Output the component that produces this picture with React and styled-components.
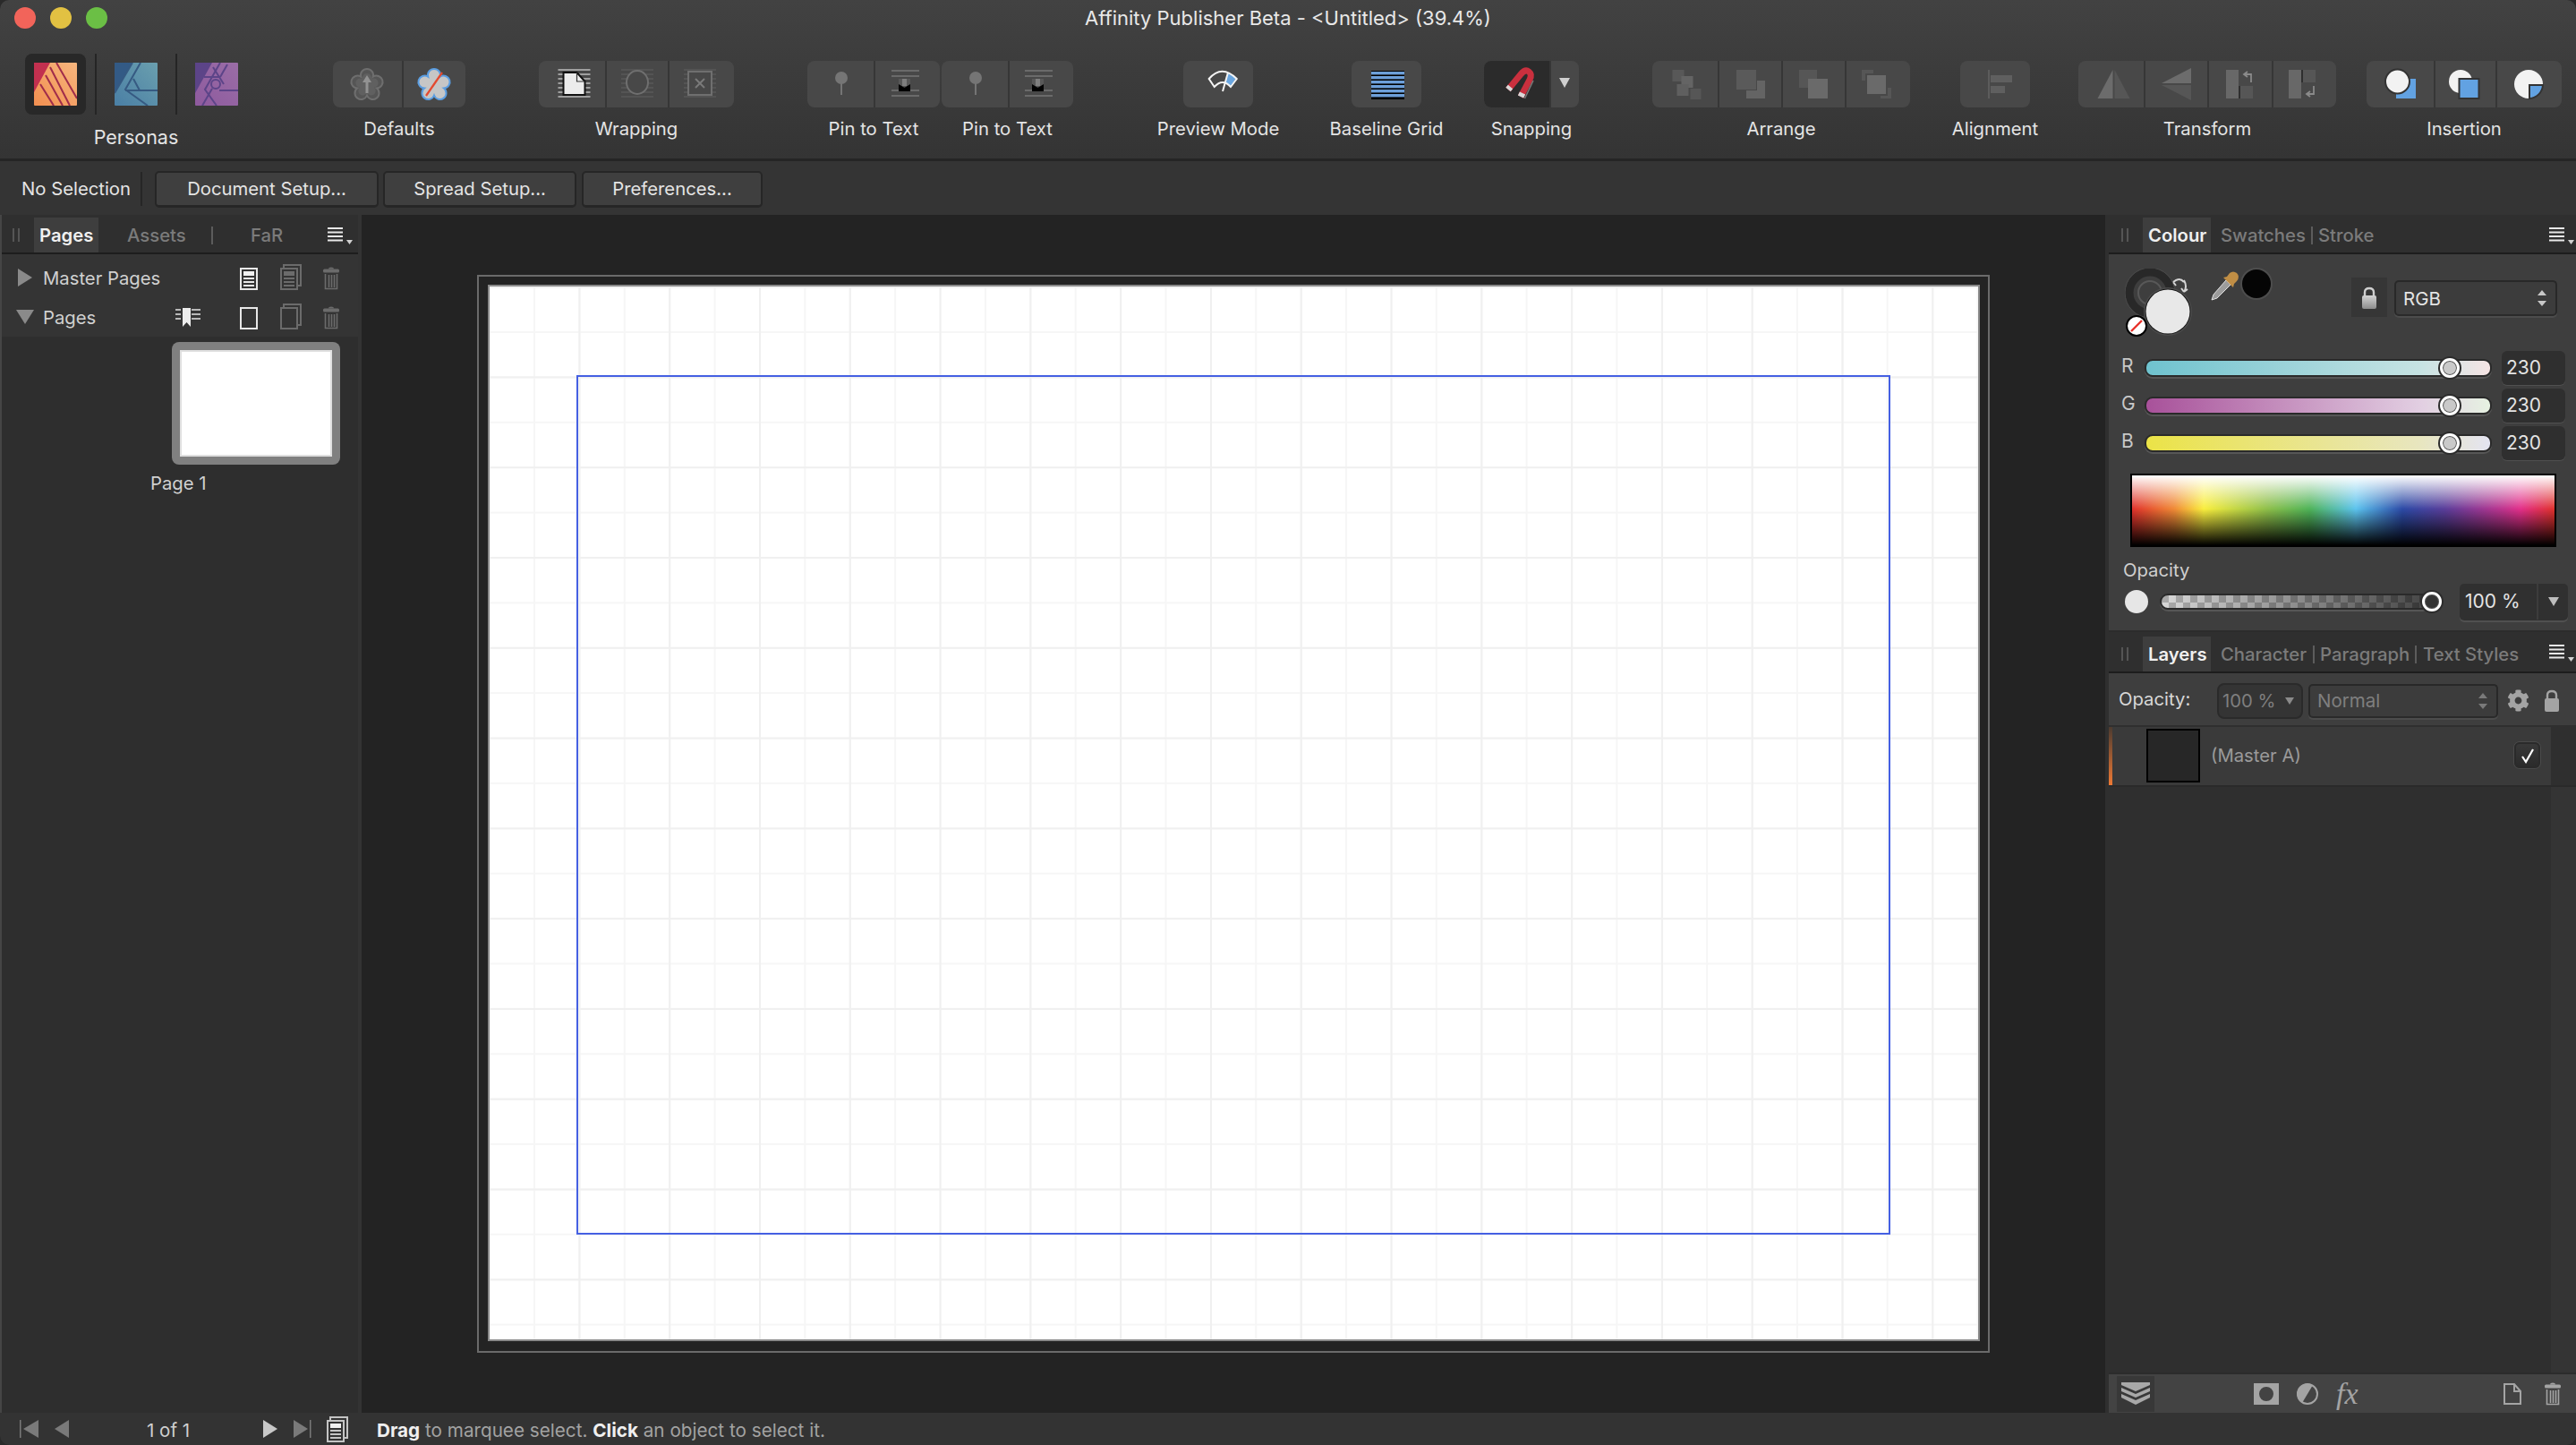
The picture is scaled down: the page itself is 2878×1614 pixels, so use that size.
import React from "react";
import styled, { createGlobalStyle } from "styled-components";
import { FaCog } from "react-icons/fa";

const GlobalStyle = createGlobalStyle`
  html, body {
    margin: 0;
    padding: 0;
    background: #2a2a2a;
    overflow: hidden;
  }
  * {
    box-sizing: border-box;
  }
`;

const Window = styled.div`
  width: 2878px;
  height: 1614px;
  display: flex;
  flex-direction: column;
  overflow: hidden;
  border-radius: 10px;
  font-family: Inter, "Liberation Sans", sans-serif;
  font-size: 20.3px;
  color: #e4e4e4;
  background: #232323;
`;

const Header = styled.header`
  height: 180px;
  flex: none;
  background: linear-gradient(to bottom, #424242, #343434);
  border-bottom: 3px solid #252525;
`;

const TitleBar = styled.div`
  height: 40px;
  display: grid;
  grid-template-columns: 1fr auto 1fr;
  align-items: center;
  padding: 0 16px;
`;

const Lights = styled.div`
  display: flex;
  gap: 16px;
`;

const Light = styled.span`
  width: 24px;
  height: 24px;
  border-radius: 50%;
  background: ${(p) => p.$color};
`;

const Title = styled.div`
  font-size: 22px;
  color: #e8e8e8;
  white-space: nowrap;
`;

const Toolbar = styled.div`
  display: flex;
  align-items: flex-start;
  padding: 20px 0 0 28px;
`;

const Personas = styled.div`
  width: 248px;
  flex: none;
  display: flex;
  flex-direction: column;
  align-items: center;
`;

const PersonaRow = styled.div`
  display: flex;
  height: 68px;
  width: 100%;
  justify-content: space-between;
`;

const PersonaSlot = styled.div`
  width: 68px;
  height: 68px;
  display: flex;
  align-items: center;
  justify-content: center;
  border-radius: 8px;
  background: ${(p) => (p.$active ? "#282828" : "transparent")};
`;

const PersonaDivider = styled.span`
  width: 2px;
  background: #252525;
`;

const PersonaLabel = styled.div`
  margin-top: 12px;
  line-height: 26px;
  font-size: 21.5px;
`;

const ToolGroup = styled.div`
  flex: none;
  width: ${(p) => p.$width}px;
  margin-left: ${(p) => p.$gap}px;
  margin-top: 8px;
  display: flex;
  flex-direction: column;
  align-items: center;
`;

const ToolStrip = styled.div`
  width: 100%;
  height: 52px;
  display: flex;
  background: #484848;
  border-radius: 8px;
  overflow: hidden;
`;

const ToolButton = styled.div`
  flex: ${(p) => p.$grow || 1} 1 0;
  display: flex;
  align-items: center;
  justify-content: center;
  background: ${(p) => (p.$on ? "#2b2b2b" : "transparent")};
  & + & {
    border-left: 2px solid #363636;
  }
`;

const ToolLabel = styled.div`
  margin-top: 11px;
  line-height: 26px;
  white-space: nowrap;
`;

const ContextBar = styled.div`
  height: 60px;
  flex: none;
  display: flex;
  align-items: center;
  background: #343434;
  padding: 2px 0 0 24px;
`;

const SelectionText = styled.div`
  width: 135px;
  flex: none;
  height: 38px;
  line-height: 38px;
  border-right: 2px solid #262626;
`;

const SetupButton = styled.div`
  width: ${(p) => p.$width}px;
  margin-left: ${(p) => p.$gap}px;
  height: 41px;
  flex: none;
  display: flex;
  align-items: center;
  justify-content: center;
  background: #3f3f3f;
  border: 2px solid #262626;
  border-bottom-width: 3px;
  border-radius: 5px;
`;

const Body = styled.div`
  flex: 1;
  min-height: 0;
  display: flex;
`;

const LeftPanel = styled.aside`
  width: 404px;
  flex: none;
  display: flex;
  flex-direction: column;
  background: #2e2e2e;
  border-left: 2px solid #454545;
  border-right: 4px solid #333;
`;

const TabBar = styled.div`
  height: ${(p) => p.$height || 44}px;
  flex: none;
  display: flex;
  align-items: flex-end;
  border-bottom: 2px solid #1d1d1d;
  background: #2f2f2f;
  position: relative;
`;

const Grip = styled.span`
  width: 8px;
  height: 15px;
  margin: 0 ${(p) => p.$right}px 12px ${(p) => p.$left}px;
  flex: none;
  border-left: 2px solid #555;
  border-right: 2px solid #555;
`;

const Tab = styled.div`
  width: ${(p) => p.$width}px;
  margin-left: ${(p) => p.$gap || 0}px;
  height: 39px;
  flex: none;
  line-height: 40px;
  padding-left: ${(p) => p.$pad || 0}px;
  white-space: nowrap;
  color: ${(p) => (p.$active ? "#f0f0f0" : "#7b7b7b")};
  font-weight: ${(p) => (p.$active ? 600 : 500)};
  background: ${(p) => (p.$active ? "#3e3e3e" : "transparent")};
`;

const TabRule = styled.span`
  width: 2px;
  height: 20px;
  margin: 0 0 9px ${(p) => p.$gap}px;
  flex: none;
  background: #5c5c5c;
`;

const MenuIcon = styled.svg`
  position: absolute;
  right: ${(p) => p.$right}px;
  top: 14px;
`;

const PagesHead = styled.div`
  flex: none;
  height: 92px;
  padding-top: 4px;
  background: #343434;
`;

const PageRow = styled.div`
  height: 44px;
  display: flex;
  align-items: center;
  padding-left: 16px;
  position: relative;
  color: #d0d0d0;
`;

const RowName = styled.span`
  margin-left: ${(p) => p.$gap}px;
  width: ${(p) => p.$width}px;
  flex: none;
`;

const RowIcons = styled.div`
  display: flex;
  align-items: flex-end;
  gap: 24px;
  margin: -2px 0 0 ${(p) => p.$gap}px;
`;

const Thumb = styled.div`
  width: 188px;
  height: 137px;
  margin: 6px 0 0 190px;
  padding: 9px;
  background: #808080;
  border-radius: 8px;
`;

const ThumbPaper = styled.div`
  height: 100%;
  background: #fff;
  border: 2px solid #e0e0e0;
`;

const ThumbCaption = styled.div`
  margin: 8px 0 0 166px;
  line-height: 26px;
  color: #d0d0d0;
`;

const Canvas = styled.main`
  flex: 1;
  min-width: 0;
  background: #232323;
  padding: 67px 0 0 129px;
`;

const PageFrame = styled.div`
  width: 1690px;
  height: 1204px;
  border: 2px solid #6a6a6a;
  padding: 9px 9px 11px 10px;
`;

const Paper = styled.div`
  height: 100%;
  border: 2px solid #8a8a8a;
  padding: 99px 98px 117px 97px;
  background-color: #fff;
  background-image: linear-gradient(to right, #f0f0f0 2px, transparent 2px),
    linear-gradient(to bottom, #f0f0f0 2px, transparent 2px),
    linear-gradient(to right, #f6f6f6 2px, transparent 2px),
    linear-gradient(to bottom, #f6f6f6 2px, transparent 2px);
  background-size: 100.8px 100.8px, 100.8px 100.8px, 50.4px 50.4px, 50.4px 50.4px;
  background-position: -1.4px 0, 0 -0.4px, -1.4px 0, 0 -0.4px;
`;

const MarginBox = styled.div`
  height: 100%;
  border: 2px solid #4560e2;
`;

const RightColumn = styled.aside`
  width: 526px;
  flex: none;
  display: flex;
  flex-direction: column;
  background: #2e2e2e;
  border-left: 4px solid #2f2f2f;
`;

const ColourPanel = styled.section`
  height: 466px;
  flex: none;
  background: #3e3e3e;
  border-bottom: 2px solid #2c2c2c;
`;

const FillRow = styled.div`
  height: 90px;
  display: flex;
  position: relative;
`;

const FillWrap = styled.div`
  position: absolute;
  left: 18px;
  top: 16px;
`;

const DropperSvg = styled.svg`
  position: absolute;
  left: 113px;
  top: 18px;
`;

const LockBox = styled.div`
  position: absolute;
  left: 271px;
  top: 26px;
  width: 40px;
  height: 44px;
  display: flex;
  align-items: center;
  justify-content: center;
  background: #363636;
`;

const SelectBox = styled.div`
  width: ${(p) => p.$width}px;
  height: ${(p) => p.$height || 40}px;
  flex: none;
  display: flex;
  align-items: center;
  justify-content: space-between;
  padding: 0 10px 0 8px;
  background: #3c3c3c;
  border: 2px solid #282828;
  border-bottom-color: #2a2a2a;
  border-radius: 5px;
  box-shadow: 0 2px 0 #4c4c4c;
  color: ${(p) => p.$color || "#e4e4e4"};
  font-size: 20.5px;
`;

const RgbSelect = styled(SelectBox)`
  position: absolute;
  left: 319px;
  top: 29px;
`;

const Sliders = styled.div`
  display: flex;
  flex-direction: column;
  gap: 4px;
  margin-top: 18px;
`;

const SliderRow = styled.div`
  height: 38px;
  display: flex;
  align-items: center;
  padding-left: 14px;
  color: #c8c8c8;
  font-size: 21px;
`;

const SliderLetter = styled.span`
  width: 26px;
  flex: none;
  margin-top: -5px;
`;

const Track = styled.div`
  position: relative;
  width: ${(p) => p.$width}px;
  height: ${(p) => p.$height}px;
  flex: none;
  border-radius: 9px;
  border: 2px solid #2a2a2a;
  background: ${(p) => p.$fill};
  box-shadow: 0 2px 0 #565656;
`;

const OpacityTrack = styled(Track)`
  margin-left: 13px;
`;

const Thumbwheel = styled.span`
  position: absolute;
  width: 22px;
  height: 22px;
  top: 50%;
  left: ${(p) => p.$left}px;
  transform: translate(-50%, -50%);
  border-radius: 50%;
  border: 3px solid #fff;
  background: ${(p) => p.$fill};
  box-shadow: 0 0 0 2px #2c2c2c, inset 0 0 0 1px #555;
`;

const ValueBox = styled.div`
  width: 71px;
  height: 38px;
  flex: none;
  margin-left: 11px;
  padding-left: 5px;
  line-height: 38px;
  color: #e4e4e4;
  background: #2f2f2f;
  border-radius: 6px;
  box-shadow: 0 1px 0 #505050;
`;

const Spectrum = styled.div`
  width: 476px;
  height: 82px;
  margin: 15px 0 0 24px;
  border: 2px solid #000;
  background: linear-gradient(to bottom, #fff 0%, rgba(255, 255, 255, 0) 48%),
    linear-gradient(to bottom, rgba(0, 0, 0, 0) 48%, #000 100%),
    linear-gradient(
      to right,
      #e0322c 0%,
      #f08a36 10%,
      #f9ee3e 17%,
      #8ebf4a 32%,
      #4fb358 42%,
      #5cc3ee 53%,
      #2c4aa6 64%,
      #5a3e9a 74%,
      #c0348e 88%,
      #e3308a 92%,
      #e0322c 100%
    );
`;

const OpacityLabel = styled.div`
  margin: 13px 0 0 16px;
  line-height: 26px;
  color: #cfcfcf;
`;

const OpacityRow = styled.div`
  display: flex;
  align-items: center;
  margin-top: 1px;
  height: 42px;
  padding-left: 18px;
`;

const OpacityDot = styled.span`
  width: 26px;
  height: 26px;
  flex: none;
  border-radius: 50%;
  background: #e6e6e6;
`;

const OpacityValue = styled.div`
  width: 121px;
  height: 41px;
  margin-left: 32px;
  flex: none;
  display: flex;
  align-items: center;
  background: #303030;
  border-radius: 5px;
  box-shadow: 0 2px 0 #505050;
  font-size: 21px;
`;

const OpacityText = styled.span`
  width: 88px;
  padding-left: 6px;
  border-right: 2px solid #3c3c3c;
  line-height: 40px;
`;

const DropArrow = styled.span`
  margin-left: 11px;
  border-top: 10px solid #bdbdbd;
  border-left: 6px solid transparent;
  border-right: 6px solid transparent;
`;

const LayersPanel = styled.section`
  flex: 1;
  min-height: 0;
  display: flex;
  flex-direction: column;
  background: #2f2f2f;
`;

const LayerControls = styled.div`
  height: 58px;
  flex: none;
  display: flex;
  align-items: center;
  padding: 3px 0 0 11px;
  background: #3e3e3e;
`;

const ControlLabel = styled.span`
  width: 110px;
  flex: none;
  margin-top: -4px;
  color: #d8d8d8;
`;

const PercentBox = styled.div`
  width: 96px;
  height: 40px;
  flex: none;
  display: flex;
  align-items: center;
  justify-content: space-between;
  padding: 0 8px 0 4px;
  background: #343434;
  border: 2px solid #2a2a2a;
  border-radius: 8px;
  color: #7f7f7f;
`;

const TinyArrow = styled.span`
  border-top: 8px solid #8a8a8a;
  border-left: 5px solid transparent;
  border-right: 5px solid transparent;
`;

const BlendSelect = styled(SelectBox)`
  margin-left: 6px;
  background: #3c3c3c;
`;

const ControlIcons = styled.div`
  display: flex;
  align-items: center;
  gap: 16px;
  margin-left: 10px;
  color: #a4a4a4;
`;

const LayerRow = styled.div`
  width: 494px;
  height: 65px;
  flex: none;
  margin-top: 2px;
  display: flex;
  align-items: center;
  padding-left: 38px;
  background: #3a3a3a;
  border-left: 4px solid;
  border-image: linear-gradient(to bottom, #4a3a30, #f07a34) 1;
`;

const LayerThumb = styled.div`
  width: 60px;
  height: 60px;
  flex: none;
  margin-top: -2px;
  background: #272727;
  border: 2px solid #000;
`;

const LayerName = styled.span`
  margin: -3px 0 0 12px;
  width: 339px;
  flex: none;
  color: #9a9a9a;
`;

const CheckBox = styled.div`
  width: 29px;
  height: 29px;
  margin-top: -2px;
  display: flex;
  align-items: center;
  justify-content: center;
  background: linear-gradient(to bottom, #383838, #2b2b2b);
  border: 2px solid #2a2a2a;
  border-radius: 6px;
  box-shadow: 0 0 0 1px #4a4a4a;
`;

const LayerSpace = styled.div`
  flex: 1;
  border-top: 2px solid #2a2a2a;
  background: linear-gradient(to right, #2f2f2f 494px, #343434 494px);
`;

const LayerFooter = styled.div`
  height: 45px;
  flex: none;
  display: flex;
  align-items: center;
  padding-left: 9px;
  background: #434343;
  border-top: 2px solid #2c2c2c;
`;

const StackButton = styled.div`
  width: 42px;
  height: 40px;
  flex: none;
  display: flex;
  align-items: center;
  justify-content: center;
  background: #383838;
`;

const FooterGroup = styled.div`
  display: flex;
  align-items: center;
  gap: ${(p) => p.$spread}px;
  margin-left: ${(p) => p.$gap}px;
`;

const FxText = styled.span`
  font-family: "Liberation Serif", serif;
  font-style: italic;
  font-size: 34px;
  line-height: 30px;
  color: #a4a4a4;
`;

const StatusBar = styled.footer`
  height: 36px;
  flex: none;
  display: flex;
  align-items: center;
  padding-left: 22px;
  background: #333;
`;

const PageNav = styled.div`
  width: 370px;
  flex: none;
  display: flex;
  align-items: center;
`;

const PageCount = styled.span`
  width: 217px;
  flex: none;
  padding-left: 87px;
  padding-top: 2px;
  font-size: 20.5px;
  color: #cfcfcf;
`;

const NavSpacer = styled.span`
  width: 16px;
  flex: none;
`;

const Hint = styled.div`
  margin-left: 29px;
  padding-top: 2px;
  font-size: 20.7px;
  color: #a2a2a2;
  white-space: nowrap;
  b {
    color: #efefef;
    font-weight: 700;
  }
`;

const IconSvg = styled.svg`
  overflow: visible;
  flex: none;
`;

const DropSvg = styled.svg`
  margin-bottom: 4px;
`;

const NavSvg = styled.svg`
  margin-left: ${(p) => p.$margin}px;
  flex: none;
`;

const BlackSwatch = styled.span`
  position: absolute;
  left: 149px;
  top: 17px;
  width: 32px;
  height: 32px;
  border-radius: 50%;
  background: #050505;
  box-shadow: 0 0 0 2px #4d4d4d;
`;

const DIM = "#5f5f5f";
const DIMMER = "#545454";

const flowerPath = (() => {
  const pts = [];
  for (let i = 0; i < 5; i++) {
    const a = ((-54 + 72 * i) * Math.PI) / 180;
    pts.push([20 + 11.5 * Math.cos(a), 21 + 11.5 * Math.sin(a)]);
  }
  const arcs = pts
    .map((pt, i) => {
      const n = pts[(i + 1) % 5];
      return `A7 7 0 1 1 ${n[0].toFixed(2)} ${n[1].toFixed(2)}`;
    })
    .join(" ");
  return `M${pts[0][0].toFixed(2)} ${pts[0][1].toFixed(2)} ${arcs} Z`;
})();

const Icon = ({ children, size = 40 }) => (
  <IconSvg width={size} height={size} viewBox={`0 0 ${size} ${size}`}>
    {children}
  </IconSvg>
);

const PublisherLogo = () => (
  <svg width="48" height="48" viewBox="0 0 48 48">
    <defs>
      <linearGradient id="pub" x1="1" y1="0" x2="0" y2="1">
        <stop offset="0" stopColor="#f7b67e" />
        <stop offset="1" stopColor="#f28f50" />
      </linearGradient>
    </defs>
    <rect width="48" height="48" rx="1" fill="url(#pub)" />
    <path d="M0 0H18L0 33Z" fill="#c2304f" />
    <g stroke="#a02c4a" strokeWidth="2" fill="none">
      <path d="M25 0L48 40" />
      <path d="M18 5L40 48" />
      <path d="M13 14L32 48" />
      <path d="M7 24L22 48" />
    </g>
  </svg>
);

const DesignerLogo = () => (
  <svg width="48" height="48" viewBox="0 0 48 48">
    <defs>
      <linearGradient id="des" x1="1" y1="0" x2="0" y2="1">
        <stop offset="0" stopColor="#6a9fae" />
        <stop offset="1" stopColor="#4a7fa5" />
      </linearGradient>
    </defs>
    <rect width="48" height="48" rx="1" fill="url(#des)" />
    <path d="M0 0H20L0 34Z" fill="#335a85" />
    <g stroke="#365a82" strokeWidth="2" fill="none">
      <path d="M20 0L0 34" />
      <path d="M29 0L12 30L37 48" />
      <path d="M12 31H48" />
      <path d="M21 18L28 31" />
    </g>
  </svg>
);

const PhotoLogo = () => (
  <svg width="48" height="48" viewBox="0 0 48 48">
    <defs>
      <linearGradient id="pho" x1="1" y1="0" x2="0" y2="1">
        <stop offset="0" stopColor="#9a6da6" />
        <stop offset="1" stopColor="#8e5a9e" />
      </linearGradient>
    </defs>
    <rect width="48" height="48" rx="1" fill="url(#pho)" />
    <path d="M0 0H19L0 34Z" fill="#5c4488" />
    <g stroke="#5c4488" strokeWidth="2" fill="none">
      <path d="M28 0L11 30L24 48" />
      <path d="M10 16H28" />
      <path d="M20 5L32 24" />
      <path d="M27 31H48" />
      <path d="M19 29L8 48" />
      <circle cx="23" cy="24" r="5" />
      <path d="M28 16L36 2" />
    </g>
  </svg>
);

const Flower = ({ fill, stroke, children }) => (
  <Icon>
    <path d={flowerPath} fill={fill} stroke={stroke} strokeWidth="2" />
    {children}
  </Icon>
);

const WrapLines = ({ color, rows }) => (
  <g fill={color}>
    {rows.map((y) => (
      <rect key={y} x="2" y={y} width="36" height="2" />
    ))}
  </g>
);

const WRAP_ROWS = [3, 8, 13, 18, 23, 28, 33];

const PinGlyph = () => (
  <Icon>
    <ellipse cx="21" cy="13" rx="7" ry="7" fill="#757575" />
    <rect x="20" y="13" width="2" height="19" fill="#757575" />
  </Icon>
);

const PinText = () => (
  <Icon>
    <g fill="#6a6a6a">
      <rect x="2" y="4" width="31" height="2" />
      <rect x="2" y="10" width="31" height="2" />
      <rect x="2" y="26" width="31" height="2" />
      <rect x="2" y="32" width="31" height="2" />
    </g>
    <rect x="10" y="14" width="13" height="9" fill="#585858" />
    <rect x="14" y="14" width="5" height="8" fill="#7e7e7e" />
    <path d="M10 20L16.500 24L23 20V28H10Z" fill="#000" />
  </Icon>
);

const PreviewGlyph = () => (
  <Icon>
    <path d="M30.700 7L40 13.500L34 22L28 18.500Z" fill="#6aa6e0" />
    <path
      d="M9.700 14Q24 -2.600 40.700 14L34 23Q25 13 15.700 23Z"
      fill="none"
      stroke="#f4f4f4"
      strokeWidth="2"
    />
    <path d="M30.700 8L25 28" stroke="#f4f4f4" strokeWidth="2" fill="none" />
  </Icon>
);

const BaselineGlyph = () => (
  <Icon>
    <g transform="translate(1 0)">
      <rect x="2" y="5" width="37" height="32" fill="#000" />
      {[6, 11, 16, 21, 26, 31].map((y) => (
        <rect key={y} x="2" y={y} width="37" height="3.4" fill="#6d9fd9" />
      ))}
    </g>
  </Icon>
);

const MagnetGlyph = () => (
  <Icon>
    <path
      d="M11 26L25 9Q30 3 34 6Q38 9 35 15L25 34"
      fill="none"
      stroke="#c9303e"
      strokeWidth="7"
    />
    <path d="M11 26L13.500 23M25 34L27 30" fill="none" stroke="#d9d9d9" strokeWidth="7" />
    <path d="M29.500 36L39 16" fill="none" stroke="#7a7a7a" strokeWidth="1.500" />
  </Icon>
);

const ToolDrop = () => (
  <DropSvg width="12" height="11" viewBox="0 0 12 11">
    <path d="M0 0H12L6 11Z" fill="#cfcfcf" />
  </DropSvg>
);

const ArrangeOne = () => (
  <Icon>
    <g transform="translate(2.500 0)">
      <rect x="3" y="4" width="13" height="13" fill="#585858" />
      <rect x="13" y="11" width="13" height="13" fill="#646464" />
      <rect x="8" y="20" width="13" height="13" fill="#5f5f5f" />
      <rect x="23" y="25" width="12" height="12" fill="#565656" />
    </g>
  </Icon>
);

const ArrangeTwo = () => (
  <Icon>
    <rect x="4" y="4" width="22" height="22" fill="#5a5a5a" />
    <path d="M27 16H36V36H15V27H27Z" fill="#646464" />
  </Icon>
);

const ArrangeThree = () => (
  <Icon>
    <rect x="4" y="4" width="20" height="20" fill="#565656" />
    <rect x="14" y="14" width="22" height="22" fill="#6a6a6a" />
  </Icon>
);

const ArrangeFour = () => (
  <Icon>
    <g transform="translate(-1 0)">
      <path d="M3 4H16V8H7V16H3Z" fill="#565656" />
      <rect x="9" y="10" width="21" height="21" fill="#6a6a6a" />
      <path d="M32 24H36V36H24V33H32Z" fill="#565656" />
    </g>
  </Icon>
);

const AlignGlyph = () => (
  <Icon>
    <g transform="translate(2 0)">
      <rect x="10" y="4" width="2" height="32" fill="#5c5c5c" />
      <rect x="13" y="10" width="24" height="8" fill={DIM} />
      <rect x="13" y="22" width="16" height="8" fill={DIM} />
    </g>
  </Icon>
);

const FlipH = () => (
  <Icon>
    <g transform="translate(2.500 0)">
      <path d="M19 4V36H2Z" fill="#6c6c6c" />
      <path d="M21 4L38 36H21Z" fill="#565656" />
    </g>
  </Icon>
);

const FlipV = () => (
  <Icon>
    <path d="M36 2V19H3Z" fill="#6c6c6c" />
    <path d="M36 38V21H3Z" fill="#565656" />
  </Icon>
);

const RotateLeft = () => (
  <Icon>
    <rect x="4" y="4" width="14" height="32" fill="#686868" />
    <rect x="18" y="22" width="16" height="14" fill="#565656" />
    <rect x="18" y="22" width="2" height="14" fill="#2f2f2f" />
    <path d="M32 18V9H25M28 6L24 9L28 12" fill="none" stroke="#8a8a8a" strokeWidth="1.800" />
  </Icon>
);

const RotateRight = () => (
  <Icon>
    <g transform="translate(-2 0)">
      <rect x="4" y="4" width="14" height="32" fill="#686868" />
      <rect x="18" y="4" width="16" height="14" fill="#565656" />
      <rect x="18" y="4" width="2" height="14" fill="#2f2f2f" />
      <path d="M32 22V31H25M28 28L24 31L28 34" fill="none" stroke="#8a8a8a" strokeWidth="1.800" />
    </g>
  </Icon>
);

const InsertBehind = () => (
  <Icon>
    <rect x="16" y="14" width="22" height="22" fill="#62a2e2" />
    <circle cx="17.500" cy="17" r="13.500" fill="#f2f2f2" stroke="#333" strokeWidth="2" />
  </Icon>
);

const InsertFront = () => (
  <Icon>
    <circle cx="15" cy="17" r="13" fill="#f2f2f2" />
    <rect x="13.500" y="14" width="22" height="22" fill="#62a2e2" stroke="#333" strokeWidth="2" />
  </Icon>
);

const InsertInside = () => (
  <Icon>
    <circle cx="19" cy="20" r="16" fill="#f2f2f2" />
    <path d="M20 21H35A16 16 0 0 1 20 36Z" fill="#62a2e2" stroke="#333" strokeWidth="2" />
  </Icon>
);

const MENU = (
  <>
    <rect x="0" y="0" width="17" height="2" fill="#e8e8e8" />
    <rect x="0" y="4.500" width="17" height="2" fill="#e8e8e8" />
    <rect x="0" y="9" width="17" height="2" fill="#e8e8e8" />
    <rect x="0" y="13.500" width="17" height="2" fill="#e8e8e8" />
    <path d="M21 14H28L24.500 19Z" fill="#d0d0d0" />
  </>
);

const DocIcon = ({ color, active, stacked, lines }) => (
  <svg width={stacked ? 25 : 20} height={stacked ? 29 : 25} viewBox={stacked ? "0 0 25 29" : "0 0 20 25"}>
    {stacked && <path d="M5 4V1H24V24H20" fill="none" stroke={color} strokeWidth="2" />}
    <g transform={stacked ? "translate(1 4)" : ""}>
      <rect x="1" y="1" width="18" height="23" fill="none" stroke={color} strokeWidth="2" />
      {lines && (
        <g fill={color}>
          <rect x="4" y="4" width="12" height="5" fill={active ? "#f0f0f0" : color} />
          <rect x="4" y="11" width="12" height="2" />
          <rect x="4" y="15" width="12" height="2" />
          <rect x="4" y="19" width="12" height="2" />
        </g>
      )}
    </g>
  </svg>
);

const TrashIcon = ({ color = "#6b6b6b" }) => (
  <svg width="18" height="26" viewBox="0 0 18 26">
    <path d="M6 2.500Q6 .5 9 .5Q12 .5 12 2.500Z" fill={color} />
    <rect x="0" y="2.500" width="18" height="4" rx="1.500" fill={color} />
    <path
      d="M2.500 8V24.500H15.500V8M6.500 9V23M9.500 9V23M12.500 9V23"
      fill="none"
      stroke={color}
      strokeWidth="1.600"
    />
  </svg>
);

const PagesWrapIcon = () => (
  <svg width="28" height="21" viewBox="0 0 28 21">
    <g fill="#b8b8b8">
      <rect x="0" y="1" width="6" height="2" />
      <rect x="0" y="6" width="6" height="2" />
      <rect x="0" y="11" width="6" height="2" />
      <rect x="18" y="1" width="10" height="2" />
      <rect x="18" y="6" width="10" height="2" />
      <rect x="18" y="11" width="10" height="2" />
    </g>
    <path d="M8 0H17V21L12.500 16L8 21Z" fill="#ededed" />
  </svg>
);

const FillWell = () => (
  <svg width="76" height="76" viewBox="0 0 76 76">
    <circle cx="28" cy="27" r="23" fill="none" stroke="#282828" strokeWidth="9" />
    <circle cx="28" cy="27" r="13" fill="none" stroke="#585858" strokeWidth="2" />
    <circle cx="28" cy="27" r="28" fill="none" stroke="#4a4a4a" strokeWidth="1" />
    <circle cx="48" cy="48" r="27" fill="#4c4c4c" />
    <circle cx="48" cy="48" r="25.500" fill="#141414" />
    <circle cx="48" cy="48" r="24.500" fill="#e8e8e8" />
    <path d="M54 15Q61 9 66 15M54 15L59 12M54 15L57 19" fill="none" stroke="#d4d4d4" strokeWidth="2" />
    <path d="M66 13Q70 20 66 26M66 26L63 22M66 26L70 23" fill="none" stroke="#d4d4d4" strokeWidth="2" />
    <circle cx="13" cy="64" r="11" fill="#fff" stroke="#000" strokeWidth="2" />
    <path d="M7 70L19 58" stroke="#e8322a" strokeWidth="2.400" />
  </svg>
);

const Dropper = () => (
  <DropperSvg width="34" height="34" viewBox="0 0 34 34">
    <path d="M18 11L4 27L2 33L8 31L23 16Z" fill="#9c9c9c" stroke="#e0e0e0" strokeWidth="1" />
    <path d="M15 8L26 19L27 15L30 12Q34 7 30 3Q26 0 22 3L19 7Z" fill="#c08e45" />
  </DropperSvg>
);

const LockGlyph = ({ color = "#b5b5b5", gradient }) => (
  <svg width="18" height="25" viewBox="0 0 18 25">
    <defs>
      <linearGradient id="lockfill" x1="0" y1="0" x2="0" y2="1">
        <stop offset="0" stopColor="#d4d4d4" />
        <stop offset="1" stopColor="#8c8c8c" />
      </linearGradient>
    </defs>
    <path d="M4 11V6.500Q4 2 9 2Q14 2 14 6.500V11" fill="none" stroke={gradient ? "#cfcfcf" : color} strokeWidth="2.400" />
    <rect x="1" y="10" width="16" height="15" rx="2" fill={gradient ? "url(#lockfill)" : color} />
  </svg>
);

const UpDown = ({ color = "#b0b0b0" }) => (
  <svg width="10" height="18" viewBox="0 0 10 18">
    <path d="M5 0L10 6H0Z M0 12H10L5 18Z" fill={color} />
  </svg>
);

const Triangle = ({ dir, color, w, h, margin, bar }) => {
  const d =
    dir === "right"
      ? `M0 0L${w} ${h / 2}L0 ${h}Z`
      : dir === "left"
      ? `M${w} 0L0 ${h / 2}L${w} ${h}Z`
      : `M0 0H${w}L${w / 2} ${h}Z`;
  const full = w + (bar ? 4 : 0);
  return (
    <NavSvg $margin={margin} width={full} height={h} viewBox={`${bar === "left" ? -4 : 0} 0 ${full} ${h}`}>
      <path d={d} fill={color} />
      {bar === "left" && <rect x="-4" y="0" width="1.500" height={h} fill={color} />}
      {bar === "right" && <rect x={w + 2} y="0" width="1.500" height={h} fill={color} />}
    </NavSvg>
  );
};

const TOOL_GROUPS = [
  {
    label: "Defaults",
    width: 148,
    gap: 96,
    tools: [
      {
        icon: (
          <Flower fill="#555" stroke="#6e6e6e">
            <path d={flowerPath} fill="#606060" transform="translate(20 21) scale(.72) translate(-20 -21)" />
            <path d="M20 10L15 18H18.500V30H21.500V18H25Z" fill="#929292" />
          </Flower>
        ),
        grow: 78,
      },
      {
        icon: (
          <Flower fill="#c6c6c6" stroke="#5b9ee2">
            <path d="M11 33L29 7" stroke="#e34a30" strokeWidth="2.200" />
          </Flower>
        ),
        grow: 70,
      },
    ],
  },
  {
    label: "Wrapping",
    width: 218,
    gap: 82,
    tools: [
      {
        icon: (
          <Icon>
            <g transform="translate(2.500 0)">
              <WrapLines color="#9f9f9f" rows={WRAP_ROWS} />
              <path d="M8 7H23L32 17V32H8Z" fill="#ececec" stroke="#111" strokeWidth="2" />
              <path d="M23 7V17H32" fill="none" stroke="#333" strokeWidth="1.200" />
            </g>
          </Icon>
        ),
        grow: 75,
      },
      {
        icon: (
          <Icon>
            <WrapLines color={DIMMER} rows={WRAP_ROWS} />
            <ellipse cx="20" cy="18" rx="12" ry="13" fill="#484848" stroke="#6f6f6f" strokeWidth="2" />
          </Icon>
        ),
        grow: 70,
      },
      {
        icon: (
          <Icon>
            <g transform="translate(-2 0)">
              <WrapLines color={DIMMER} rows={WRAP_ROWS} />
              <rect x="7" y="6" width="26" height="26" fill="#484848" stroke="#6f6f6f" strokeWidth="2" />
              <path d="M15 14L25 24M25 14L15 24" stroke="#7a7a7a" strokeWidth="2" />
            </g>
          </Icon>
        ),
        grow: 73,
      },
    ],
  },
  {
    label: "Pin to Text",
    width: 148,
    gap: 82,
    tools: [{ icon: <PinGlyph />, grow: 75 }, { icon: <PinText />, grow: 73 }],
  },
  {
    label: "Pin to Text",
    width: 147,
    gap: 2,
    tools: [{ icon: <PinGlyph />, grow: 75 }, { icon: <PinText />, grow: 72 }],
  },
  { label: "Preview Mode", width: 78, gap: 123, tools: [{ icon: <PreviewGlyph /> }] },
  { label: "Baseline Grid", width: 78, gap: 110, tools: [{ icon: <BaselineGlyph /> }] },
  {
    label: "Snapping",
    width: 106,
    gap: 70,
    tools: [
      { icon: <MagnetGlyph />, grow: 74, on: true },
      { icon: <ToolDrop />, grow: 32 },
    ],
  },
  {
    label: "Arrange",
    width: 288,
    gap: 82,
    tools: [
      { icon: <ArrangeOne />, grow: 75 },
      { icon: <ArrangeTwo />, grow: 70 },
      { icon: <ArrangeThree />, grow: 70 },
      { icon: <ArrangeFour />, grow: 73 },
    ],
  },
  { label: "Alignment", width: 78, gap: 56, tools: [{ icon: <AlignGlyph /> }] },
  {
    label: "Transform",
    width: 288,
    gap: 54,
    tools: [
      { icon: <FlipH />, grow: 75 },
      { icon: <FlipV />, grow: 70 },
      { icon: <RotateLeft />, grow: 71 },
      { icon: <RotateRight />, grow: 72 },
    ],
  },
  {
    label: "Insertion",
    width: 218,
    gap: 34,
    tools: [
      { icon: <InsertBehind />, grow: 76 },
      { icon: <InsertFront />, grow: 69 },
      { icon: <InsertInside />, grow: 73 },
    ],
  },
];

const SLIDERS = [
  { name: "R", fill: "linear-gradient(to right, #6fc3cf, #c7e3e3 80%, #f6e4e4)" },
  { name: "G", fill: "linear-gradient(to right, #a8519a, #e2cfe2 80%, #e6f2e2)" },
  { name: "B", fill: "linear-gradient(to right, #ebe347, #e8e6c0 80%, #e4e4f2)" },
];

const App = () => {
  return (
    <Window>
      <GlobalStyle />
      <Header>
        <TitleBar>
          <Lights>
            <Light $color="#f2645a" />
            <Light $color="#e2c142" />
            <Light $color="#6bbf45" />
          </Lights>
          <Title>Affinity Publisher Beta - &lt;Untitled&gt; (39.4%)</Title>
        </TitleBar>
        <Toolbar>
          <Personas>
            <PersonaRow>
              <PersonaSlot $active>
                <PublisherLogo />
              </PersonaSlot>
              <PersonaDivider />
              <PersonaSlot>
                <DesignerLogo />
              </PersonaSlot>
              <PersonaDivider />
              <PersonaSlot>
                <PhotoLogo />
              </PersonaSlot>
            </PersonaRow>
            <PersonaLabel>Personas</PersonaLabel>
          </Personas>
          {TOOL_GROUPS.map((group, i) => (
            <ToolGroup key={i} $width={group.width} $gap={group.gap}>
              <ToolStrip>
                {group.tools.map((tool, j) => (
                  <ToolButton key={j} $grow={tool.grow} $on={tool.on}>
                    {tool.icon}
                  </ToolButton>
                ))}
              </ToolStrip>
              <ToolLabel>{group.label}</ToolLabel>
            </ToolGroup>
          ))}
        </Toolbar>
      </Header>

      <ContextBar>
        <SelectionText>No Selection</SelectionText>
        <SetupButton $width={250} $gap={14}>Document Setup...</SetupButton>
        <SetupButton $width={216} $gap={5}>Spread Setup...</SetupButton>
        <SetupButton $width={202} $gap={6}>Preferences...</SetupButton>
      </ContextBar>

      <Body>
        <LeftPanel>
          <TabBar>
            <Grip $left={12} $right={16} />
            <Tab $active $width={72} $pad={6}>Pages</Tab>
            <Tab $width={94} $gap={32}>Assets</Tab>
            <TabRule $gap={0} />
            <Tab $width={50} $gap={42}>FaR</Tab>
            <MenuIcon $right={6} width="28" height="19" viewBox="0 0 28 19">{MENU}</MenuIcon>
          </TabBar>
          <PagesHead>
            <PageRow>
              <Triangle dir="right" color="#8a8a8a" w={16} h={20} margin={2} />
              <RowName $gap={12} $width={220}>Master Pages</RowName>
              <RowIcons $gap={0}>
                <DocIcon color="#e8e8e8" active lines />
                <DocIcon color="#6b6b6b" stacked lines />
                <TrashIcon />
              </RowIcons>
            </PageRow>
            <PageRow>
              <Triangle dir="down" color="#8a8a8a" w={20} h={16} margin={0} />
              <RowName $gap={10} $width={148}>Pages</RowName>
              <PagesWrapIcon />
              <RowIcons $gap={44}>
                <DocIcon color="#e8e8e8" />
                <DocIcon color="#6b6b6b" stacked />
                <TrashIcon />
              </RowIcons>
            </PageRow>
          </PagesHead>
          <Thumb>
            <ThumbPaper />
          </Thumb>
          <ThumbCaption>Page 1</ThumbCaption>
        </LeftPanel>

        <Canvas>
          <PageFrame>
            <Paper>
              <MarginBox />
            </Paper>
          </PageFrame>
        </Canvas>

        <RightColumn>
          <ColourPanel>
            <TabBar>
              <Grip $left={14} $right={16} />
              <Tab $active $width={76} $pad={6}>Colour</Tab>
              <Tab $width={101} $gap={11}>Swatches</Tab>
              <TabRule $gap={0} />
              <Tab $width={70} $gap={6}>Stroke</Tab>
              <MenuIcon $right={2} width="28" height="19" viewBox="0 0 28 19">{MENU}</MenuIcon>
            </TabBar>
            <FillRow>
              <FillWrap>
                <FillWell />
              </FillWrap>
              <Dropper />
              <BlackSwatch />
              <LockBox>
                <LockGlyph gradient />
              </LockBox>
              <RgbSelect $width={182} $height={40}>
                RGB
                <UpDown color="#c8c8c8" />
              </RgbSelect>
            </FillRow>
            <Sliders>
              {SLIDERS.map((s) => (
                <SliderRow key={s.name}>
                  <SliderLetter>{s.name}</SliderLetter>
                  <Track $width={388} $height={20} $fill={s.fill}>
                    <Thumbwheel $left={339} $fill="#c9c9c9" />
                  </Track>
                  <ValueBox>230</ValueBox>
                </SliderRow>
              ))}
            </Sliders>
            <Spectrum />
            <OpacityLabel>Opacity</OpacityLabel>
            <OpacityRow>
              <OpacityDot />
              <OpacityTrack
                $width={303}
                $height={18}
                $fill="linear-gradient(to right, rgba(255,255,255,.45), rgba(40,40,40,.8)), repeating-conic-gradient(#b8b8b8 0 25%, #666 0 50%) 0 0 / 16px 16px"
              >
                <Thumbwheel $left={302} $fill="#333" />
              </OpacityTrack>
              <OpacityValue>
                <OpacityText>100 %</OpacityText>
                <DropArrow />
              </OpacityValue>
            </OpacityRow>
          </ColourPanel>

          <LayersPanel>
            <TabBar $height={46}>
              <Grip $left={14} $right={16} />
              <Tab $active $width={76} $pad={6}>Layers</Tab>
              <Tab $width={103} $gap={11}>Character</Tab>
              <TabRule $gap={0} />
              <Tab $width={106} $gap={6}>Paragraph</Tab>
              <TabRule $gap={0} />
              <Tab $width={110} $gap={7}>Text Styles</Tab>
              <MenuIcon $right={2} width="28" height="19" viewBox="0 0 28 19">{MENU}</MenuIcon>
            </TabBar>
            <LayerControls>
              <ControlLabel>Opacity:</ControlLabel>
              <PercentBox>
                100 %
                <TinyArrow />
              </PercentBox>
              <BlendSelect $width={212} $height={38} $color="#7f7f7f">
                Normal
                <UpDown color="#7a7a7a" />
              </BlendSelect>
              <ControlIcons>
                <FaCog size={25} />
                <LockGlyph color="#a4a4a4" />
              </ControlIcons>
            </LayerControls>
            <LayerRow>
              <LayerThumb />
              <LayerName>(Master A)</LayerName>
              <CheckBox>
                <svg width="18" height="18" viewBox="0 0 18 18">
                  <path d="M3 10L7 16L15 2" fill="none" stroke="#fff" strokeWidth="2.200" />
                </svg>
              </CheckBox>
            </LayerRow>
            <LayerSpace />
            <LayerFooter>
              <StackButton>
                <svg width="32" height="26" viewBox="0 0 32 26">
                  <path d="M0 0H32V3L16 10L0 3Z M0 6L16 13L32 6V10L16 17L0 10Z M0 13L16 20L32 13V17L16 25L0 17Z" fill="#a8a8a8" />
                </svg>
              </StackButton>
              <FooterGroup $gap={111} $spread={20}>
                <svg width="28" height="24" viewBox="0 0 28 24">
                  <path fillRule="evenodd" d="M0 0H28V24H0Z M14 4A8 8 0 1 0 14 20A8 8 0 1 0 14 4Z" fill="#a4a4a4" />
                </svg>
                <svg width="24" height="24" viewBox="0 0 24 24">
                  <circle cx="12" cy="12" r="11" fill="none" stroke="#a4a4a4" strokeWidth="2" />
                  <path d="M18 2L6 22A11 11 0 0 1 18 2Z" fill="#a4a4a4" />
                </svg>
                <FxText>fx</FxText>
              </FooterGroup>
              <FooterGroup $gap={162} $spread={26}>
                <svg width="20" height="24" viewBox="0 0 20 24">
                  <path d="M1 1H12L19 9V23H1Z M12 1V9H19" fill="none" stroke="#a4a4a4" strokeWidth="2" />
                </svg>
                <TrashIcon color="#a4a4a4" />
              </FooterGroup>
            </LayerFooter>
          </LayersPanel>
        </RightColumn>
      </Body>

      <StatusBar>
        <PageNav>
          <Triangle dir="left" color="#7a7a7a" w={17} h={20} margin={0} bar="left" />
          <Triangle dir="left" color="#7a7a7a" w={16} h={20} margin={18} />
          <PageCount>1 of 1</PageCount>
          <Triangle dir="right" color="#c8c8c8" w={16} h={20} margin={0} />
          <Triangle dir="right" color="#7a7a7a" w={16} h={20} margin={18} bar="right" />
          <NavSpacer />
          <DocIcon color="#c4c4c4" stacked active lines />
        </PageNav>
        <Hint>
          <b>Drag</b> to marquee select. <b>Click</b> an object to select it.
        </Hint>
      </StatusBar>
    </Window>
  );
};

export default App;
